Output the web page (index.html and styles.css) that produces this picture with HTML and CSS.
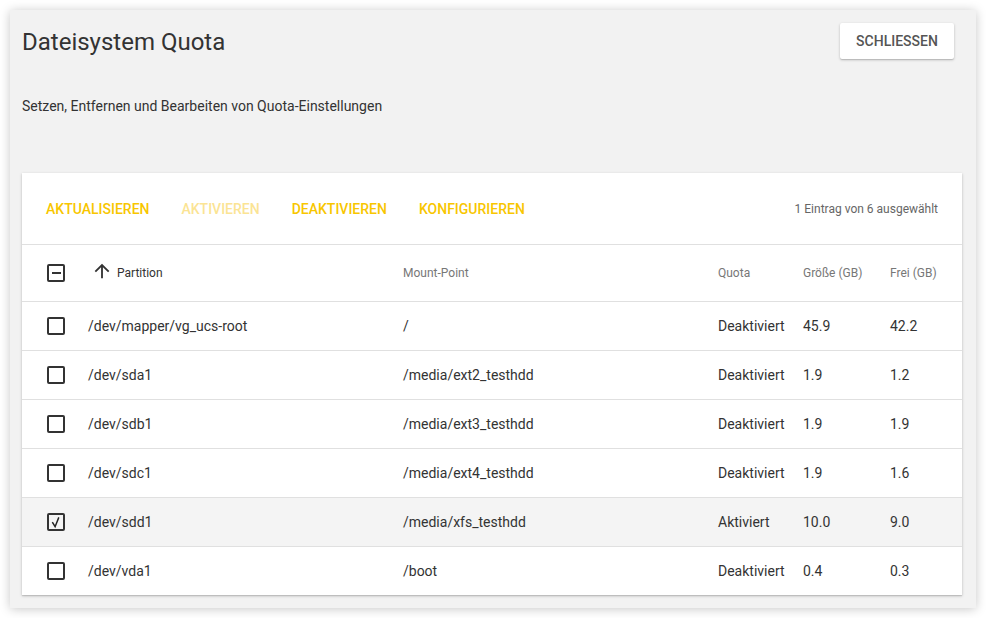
FILE: index.html
```html
<!DOCTYPE html>
<html lang="de">
<head>
<meta charset="utf-8">
<title>Dateisystem Quota</title>
<link rel="stylesheet" href="styles.css">
</head>
<body>
<div class="dialog">
  <div class="header">
    <h1 class="title">Dateisystem Quota</h1>
    <button class="close-btn">Schliessen</button>
  </div>
  <p class="subtitle">Setzen, Entfernen und Bearbeiten von Quota-Einstellungen</p>
  <div class="card">
    <div class="toolbar">
      <div class="actions">
        <button class="action">Aktualisieren</button>
        <button class="action disabled">Aktivieren</button>
        <button class="action">Deaktivieren</button>
        <button class="action">Konfigurieren</button>
      </div>
      <div class="count">1 Eintrag von 6 ausgewählt</div>
    </div>
    <div class="table">
      <div class="row head">
        <div class="cell cb-cell"><span class="cb"><span class="minus"></span></span></div>
        <div class="cell sorted"><svg class="arrow" viewBox="0 0 24 24"><path d="M4 12l1.41 1.41L11 7.83V20h2V7.83l5.58 5.59L20 12l-8-8-8 8z"/></svg>Partition</div>
        <div class="cell">Mount-Point</div>
        <div class="cell">Quota</div>
        <div class="cell">Größe (GB)</div>
        <div class="cell">Frei (GB)</div>
      </div>
      <div class="row">
        <div class="cell cb-cell"><span class="cb"></span></div>
        <div class="cell">/dev/mapper/vg_ucs-root</div>
        <div class="cell">/</div>
        <div class="cell">Deaktiviert</div>
        <div class="cell">45.9</div>
        <div class="cell">42.2</div>
      </div>
      <div class="row">
        <div class="cell cb-cell"><span class="cb"></span></div>
        <div class="cell">/dev/sda1</div>
        <div class="cell">/media/ext2_testhdd</div>
        <div class="cell">Deaktiviert</div>
        <div class="cell">1.9</div>
        <div class="cell">1.2</div>
      </div>
      <div class="row">
        <div class="cell cb-cell"><span class="cb"></span></div>
        <div class="cell">/dev/sdb1</div>
        <div class="cell">/media/ext3_testhdd</div>
        <div class="cell">Deaktiviert</div>
        <div class="cell">1.9</div>
        <div class="cell">1.9</div>
      </div>
      <div class="row">
        <div class="cell cb-cell"><span class="cb"></span></div>
        <div class="cell">/dev/sdc1</div>
        <div class="cell">/media/ext4_testhdd</div>
        <div class="cell">Deaktiviert</div>
        <div class="cell">1.9</div>
        <div class="cell">1.6</div>
      </div>
      <div class="row selected">
        <div class="cell cb-cell"><span class="cb"><svg class="check" viewBox="0 0 14 14"><path d="M2.5 6.5 L5.5 11.5 L9.5 1.5"/></svg></span></div>
        <div class="cell">/dev/sdd1</div>
        <div class="cell">/media/xfs_testhdd</div>
        <div class="cell">Aktiviert</div>
        <div class="cell">10.0</div>
        <div class="cell">9.0</div>
      </div>
      <div class="row last">
        <div class="cell cb-cell"><span class="cb"></span></div>
        <div class="cell">/dev/vda1</div>
        <div class="cell">/boot</div>
        <div class="cell">Deaktiviert</div>
        <div class="cell">0.4</div>
        <div class="cell">0.3</div>
      </div>
    </div>
  </div>
</div>
</body>
</html>
```

FILE: styles.css
```css
* { box-sizing: border-box; }
html, body {
  margin: 0;
  padding: 0;
  background: #ffffff;
  font-family: Roboto, "Liberation Sans", sans-serif;
  color: #333333;
}
.dialog {
  margin: 10px;
  width: 966px;
  height: 598px;
  background: #f2f2f2;
  box-shadow: 0 1px 10px rgba(0, 0, 0, 0.22);
  padding: 13px 14px 13px 12px;
  display: flex;
  flex-direction: column;
}
.header {
  display: flex;
  align-items: center;
  justify-content: space-between;
  height: 36px;
  padding-right: 8px;
}
.title {
  margin: 0;
  font-size: 24px;
  font-weight: 400;
  color: #333;
  line-height: 32px;
  position: relative;
  top: 1px;
}
.close-btn {
  height: 36px;
  width: 114px;
  background: #fff;
  border: none;
  border-radius: 2px;
  box-shadow: 0 1px 3px rgba(0, 0, 0, 0.2), 0 1px 1px rgba(0, 0, 0, 0.12);
  font-family: Roboto, "Liberation Sans", sans-serif;
  font-size: 14px;
  font-weight: 500;
  color: #555;
  text-transform: uppercase;
  padding: 0;
}
.subtitle {
  margin: 37px 0 0 0;
  font-size: 14px;
  line-height: 20px;
  color: #333;
}
.card {
  margin-top: 57px;
  background: #fff;
  box-shadow: 0 1px 3px rgba(0, 0, 0, 0.2), 0 1px 1px rgba(0, 0, 0, 0.1);
  flex: 1;
  display: flex;
  flex-direction: column;
}
.toolbar {
  height: 72px;
  display: flex;
  align-items: center;
  justify-content: space-between;
  padding: 0 24px 0 8px;
  border-bottom: 1px solid #e0e0e0;
}
.actions { display: flex; }
.action {
  background: none;
  border: none;
  height: 36px;
  padding: 0 16px;
  font-family: Roboto, "Liberation Sans", sans-serif;
  font-size: 14px;
  font-weight: 500;
  text-transform: uppercase;
  color: #f8c600;
}
.action.disabled { color: #fbe494; }
.count {
  font-size: 12px;
  color: #666;
}
.row {
  display: grid;
  grid-template-columns: 66px 315px 315px 85px 87px 1fr;
  align-items: center;
  height: 49px;
  border-bottom: 1px solid #e0e0e0;
  font-size: 14px;
  color: #333;
}
.row.head {
  height: 57px;
  font-size: 12px;
  color: #777;
}
.row.selected { background: #f4f4f4; }
.row.last { border-bottom: none; height: 48px; }
.cell { white-space: nowrap; }
.cb-cell { padding-left: 25px; display: flex; }
.cb {
  width: 18px;
  height: 18px;
  border: 2px solid #333;
  border-radius: 2px;
  display: flex;
  align-items: center;
  justify-content: center;
}
.minus {
  width: 9px;
  height: 2px;
  background: #333;
}
.check {
  width: 13px;
  height: 13px;
  fill: none;
  stroke: #222;
  stroke-width: 1.6;
}
.sorted {
  display: flex;
  align-items: center;
  color: #333;
  margin-left: 3px;
}
.arrow {
  width: 22px;
  height: 22px;
  fill: #333;
  margin-right: 4px;
  position: relative;
  top: -2px;
}
```
